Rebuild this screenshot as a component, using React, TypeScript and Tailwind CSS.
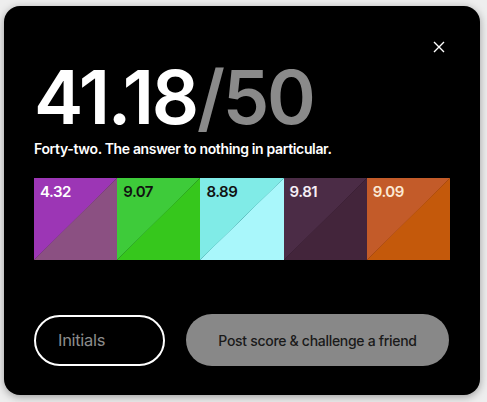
import React from "react";

const swatches = [
  { v: "4.32", a: "#9c36b5", b: "#8b5082", l: "#7a3a80", t: "#ffffff" },
  { v: "9.07", a: "#3ecb3a", b: "#36c71c", l: "#2aa020", t: "#111111" },
  { v: "8.89", a: "#80ebe7", b: "#a9f7fb", l: "#5fbfc0", t: "#111111" },
  { v: "9.81", a: "#4b2c46", b: "#43253b", l: "#3a1f34", t: "#f5eef5" },
  { v: "9.09", a: "#c35b29", b: "#c4590b", l: "#a8490e", t: "#fbe9d4" },
];

export default function App() {
  return (
    <div
      className="w-[487px] h-[402px] bg-[#eeeeee] pt-[6px] pl-[4px]"
      style={{ fontFamily: "Inter, 'Noto Sans', sans-serif" }}
    >
      <div className="relative w-[476px] h-[389px] rounded-[16px] bg-black shadow-[0_2px_8px_rgba(0,0,0,0.35)] pl-[30px] pr-[30px] flex flex-col">
        <button className="absolute right-[34px] top-[34px] w-[14px] h-[14px] flex items-center justify-center">
          <svg width="12" height="12" viewBox="0 0 12 12" fill="none">
            <path d="M1 1L11 11M11 1L1 11" stroke="white" strokeWidth="1.4" />
          </svg>
        </button>
        <div className="mt-[54px] text-[74px] leading-[74px] font-semibold tracking-[-2.2px] whitespace-nowrap">
          <span className="text-white">41.18</span>
          <span className="text-[#8a8a8a]">/50</span>
        </div>
        <div className="mt-[7px] text-[14px] leading-[16px] font-semibold text-white tracking-[-0.35px] whitespace-nowrap">
          Forty-two. The answer to nothing in particular.
        </div>
        <div className="mt-[21px] flex w-[416px] h-[82px]">
          {swatches.map((s) => (
            <div
              key={s.v}
              className="relative flex-1 h-full"
              style={{
                background: `linear-gradient(to top left, ${s.b} 49.6%, ${s.l} 50%, ${s.a} 50.4%)`,
              }}
            >
              <span
                className="absolute left-[6px] top-[3px] text-[15px] font-semibold tracking-[-0.5px]"
                style={{ color: s.t }}
              >
                {s.v}
              </span>
            </div>
          ))}
        </div>
        <div className="mt-[54px] flex items-center gap-[21px]">
          <div className="w-[131px] h-[51px] rounded-full border-2 border-white flex items-center pl-[22px]">
            <input
              placeholder="Initials"
              className="w-full bg-transparent outline-none text-[16.5px] text-white placeholder:text-[#8c8c8c] tracking-[-0.3px]"
            />
          </div>
          <button className="w-[263px] h-[52px] rounded-full bg-[#888888] text-[#1a1a1a] text-[14px] font-medium tracking-[-0.3px]">
            Post score &amp; challenge a friend
          </button>
        </div>
      </div>
    </div>
  );
}
